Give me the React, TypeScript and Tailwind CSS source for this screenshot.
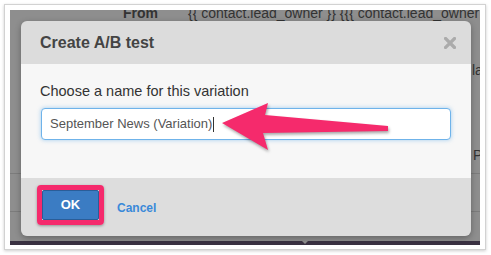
import React from "react";

export default function App() {
  const font = { fontFamily: '"Liberation Sans", Arial, Helvetica, sans-serif' };
  return (
    <div className="relative w-[491px] h-[255px] bg-white overflow-hidden" style={font}>
      <div className="ml-[4px] mt-[4px] w-[482px] h-[246px] border border-[#d2d2d2] bg-white shadow-[0_1px_3px_rgba(0,0,0,0.2)] pt-[5px] pl-[5px] pr-[5px] pb-[4px]">
        <div className="relative w-[470px] h-[235px] bg-[#8e8e8e] overflow-hidden">
          {/* background page (dimmed) */}
          <div className="flex flex-col h-full text-[#333] text-[14px] leading-[17px]">
            <div className="flex -mt-[5px] whitespace-nowrap">
              <span className="shrink-0 ml-[113px] w-[65px] font-bold">From</span>
              <span className="shrink-0">{"{{ contact.lead_owner }} {{{ contact.lead_owner"}</span>
            </div>
            <div className="mt-[40px] pl-[462px] whitespace-nowrap">la</div>
            <div className="mt-[68px] pl-[463px] whitespace-nowrap">P</div>
            <div className="mt-[9px] h-px bg-[#7c7c7c]" />
            <div className="mt-[37px] h-px bg-[#7c7c7c]" />
            <div className="mt-auto h-[4px] bg-[#3a3142] flex">
              <div className="ml-[292px] w-0 h-0 border-l-[3px] border-r-[3px] border-t-[3px] border-l-transparent border-r-transparent border-t-[#8e8e8e]" />
            </div>
          </div>

          {/* modal dialog */}
          <div className="absolute left-[11px] top-[11px] w-[450px] h-[215px] rounded-[6px] overflow-hidden flex flex-col shadow-[0_2px_6px_rgba(0,0,0,0.3)]">
            <div className="h-[43px] bg-[#dcdcdc] flex items-center justify-between pl-[19px] pr-[15px]">
              <span className="text-[16px] font-bold text-[#444]">Create A/B test</span>
              <svg width="12" height="12" viewBox="0 0 12 12" className="block">
                <path d="M1.5 1.5 L10.5 10.5 M10.5 1.5 L1.5 10.5" stroke="#ababab" strokeWidth="3.2" strokeLinecap="square" />
              </svg>
            </div>
            <div className="h-[114px] bg-[#f7f7f7] pl-[19px] pt-[17px]">
              <div className="text-[14.5px] leading-[20px] text-[#333]">Choose a name for this variation</div>
              <div className="mt-[7px] ml-[1px] w-[410px] h-[32px] bg-white border border-[#6fb3ea] rounded-[4px] shadow-[0_0_4px_rgba(102,175,233,0.6)] flex items-center pl-[8px] text-[13px] text-[#555]">
                <span>September News (Variation)</span>
                <span className="ml-[1px] w-px h-[15px] bg-[#333]" />
              </div>
            </div>
            <div className="flex-1 bg-[#dddddd] flex items-start pt-[7px] pl-[16px]">
              <div className="w-[67px] h-[40px] border-[5px] border-[#f52a6c] rounded-[4px] shadow-[0_1px_3px_rgba(0,0,0,0.35)]">
                <div className="w-full h-full bg-[#3b7cc3] border border-[#2a5d98] rounded-[2px] flex items-center justify-center text-white font-bold text-[13px]">
                  OK
                </div>
              </div>
              <span className="ml-[13px] mt-[14px] text-[12px] font-bold text-[#3a89d9]">Cancel</span>
            </div>
          </div>
        </div>
      </div>

      {/* annotation arrow */}
      <svg className="absolute left-0 top-0 pointer-events-none" width="491" height="255" viewBox="0 0 491 255">
        <polygon
          points="222,123 268,103 265,115 388,126 388,131 263,133 268,150"
          fill="#f52a6c"
          style={{ filter: "drop-shadow(1px 2px 1.5px rgba(0,0,0,0.35))" }}
        />
      </svg>
    </div>
  );
}
